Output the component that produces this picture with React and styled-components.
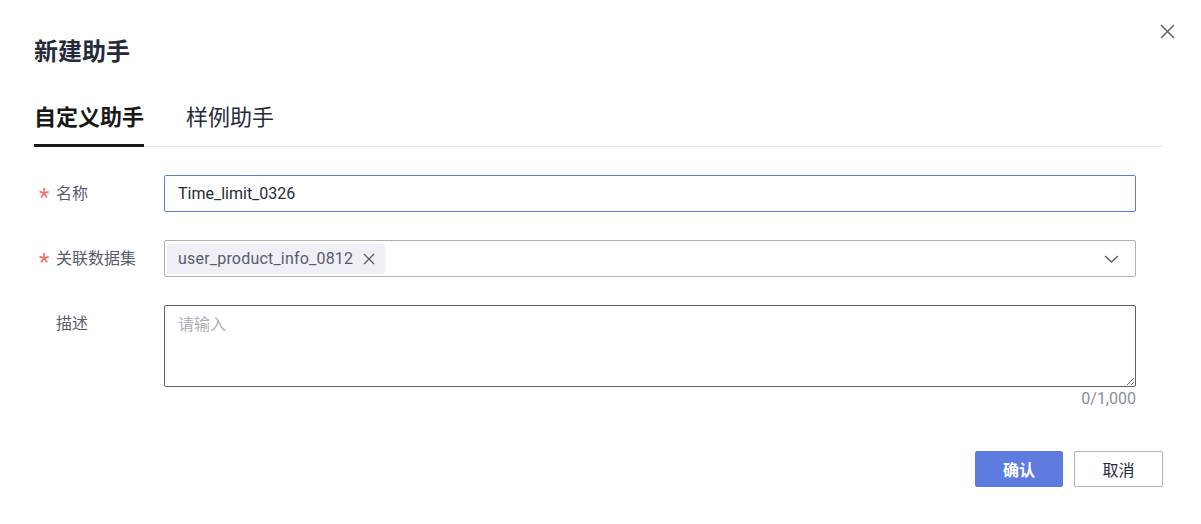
import styled, { createGlobalStyle } from "styled-components"

const GlobalStyle = createGlobalStyle`
    * { box-sizing: border-box; }
    body {
        margin: 0;
        background: #fff;
        font-family: Roboto, "Noto Sans CJK SC", sans-serif;
        color: #252b3a;
    }
`

const Dialog = styled.div`
    position: relative;
    width: 1201px;
    height: 524px;
    padding: 36px 38px 0 34px;
    background: #fff;
`

const Title = styled.h2`
    margin: 0;
    font-size: 24px;
    line-height: 32px;
    font-weight: 700;
    color: #252b3a;
`

const CloseBtn = styled.button`
    position: absolute;
    top: 24px;
    right: 26px;
    width: 15px;
    height: 15px;
    padding: 0;
    border: none;
    background: none;
    cursor: pointer;
    display: flex;
`

const Tabs = styled.div`
    display: flex;
    gap: 42px;
    margin-top: 35px;
    border-bottom: 1px solid #ebebeb;
`

const Tab = styled.div`
    font-size: 22px;
    line-height: 30px;
    padding-bottom: 11px;
    margin-bottom: -1px;
    font-weight: ${p => (p.$active ? 700 : 400)};
    color: ${p => (p.$active ? "#191919" : "#252b3a")};
    border-bottom: 3px solid ${p => (p.$active ? "#191919" : "transparent")};
    cursor: pointer;
`

const Form = styled.div`
    display: flex;
    flex-direction: column;
    gap: 28px;
    margin-top: 28px;
    padding-right: 27px;
`

const Row = styled.div`
    display: grid;
    grid-template-columns: 130px 1fr;
    align-items: start;
`

const Label = styled.div`
    display: flex;
    align-items: center;
    padding: 7px 0 0 5px;
    font-size: 16px;
    line-height: 24px;
    color: #575d6c;
`

const Star = styled.span`
    width: 17px;
    height: 24px;
    font-size: 24px;
    line-height: 24px;
    color: #f66f6a;
    transform: translateY(3px);
    visibility: ${p => (p.$blank ? "hidden" : "visible")};
`

const Input = styled.input`
    width: 100%;
    height: 37px;
    padding: 0 13px;
    border: 1px solid #5e7ce0;
    border-radius: 2px;
    font: inherit;
    font-size: 16px;
    color: #252b3a;
    outline: none;
`

const Select = styled.div`
    display: flex;
    align-items: center;
    height: 37px;
    padding: 0 16px 0 2px;
    border: 1px solid #adb0b8;
    border-radius: 2px;
`

const Tag = styled.span`
    display: flex;
    align-items: center;
    gap: 10px;
    height: 30px;
    padding: 0 10px 0 11px;
    background: #eef0f5;
    border-radius: 2px;
    font-size: 16px;
    letter-spacing: 0.2px;
    color: #575d6c;
`

const Chevron = styled.span`
    margin-left: auto;
    display: flex;
`

const Field = styled.div`
    display: flex;
    flex-direction: column;
`

const TextArea = styled.textarea`
    width: 100%;
    height: 82px;
    padding: 7px 13px;
    border: 1px solid #5c6170;
    border-radius: 2px;
    font: inherit;
    font-size: 16px;
    line-height: 24px;
    color: #252b3a;
    outline: none;
    display: block;
    &::placeholder { color: #adb0b8; }
`

const Counter = styled.div`
    text-align: right;
    font-size: 16px;
    line-height: 24px;
    color: #8a8e99;
`

const Footer = styled.div`
    display: flex;
    justify-content: flex-end;
    gap: 11px;
    margin-top: 40px;
`

const Button = styled.button`
    width: ${p => (p.$primary ? "88px" : "89px")};
    height: 36px;
    border-radius: 2px;
    font: inherit;
    font-size: 16px;
    font-weight: ${p => (p.$primary ? 700 : 400)};
    color: ${p => (p.$primary ? "#fff" : "#252b3a")};
    background: ${p => (p.$primary ? "#5e7ce0" : "#fff")};
    border: 1px solid ${p => (p.$primary ? "#5e7ce0" : "#adb0b8")};
    cursor: pointer;
`

const App = () => {
    return (
        <Dialog>
            <GlobalStyle />
            <Title>新建助手</Title>
            <CloseBtn>
                <svg width="15" height="15" viewBox="0 0 15 15">
                    <path d="M1 1L14 14M14 1L1 14" stroke="#5c6170" strokeWidth="1.5" />
                </svg>
            </CloseBtn>
            <Tabs>
                <Tab $active>自定义助手</Tab>
                <Tab>样例助手</Tab>
            </Tabs>
            <Form>
                <Row>
                    <Label><Star>*</Star>名称</Label>
                    <Input defaultValue="Time_limit_0326" />
                </Row>
                <Row>
                    <Label><Star>*</Star>关联数据集</Label>
                    <Select>
                        <Tag>
                            user_product_info_0812
                            <svg width="12" height="12" viewBox="0 0 12 12">
                                <path d="M1 1L11 11M11 1L1 11" stroke="#575d6c" strokeWidth="1.3" />
                            </svg>
                        </Tag>
                        <Chevron>
                            <svg width="15" height="8" viewBox="0 0 15 8">
                                <path d="M1 1L7.5 7L14 1" fill="none" stroke="#575d6c" strokeWidth="1.5" />
                            </svg>
                        </Chevron>
                    </Select>
                </Row>
                <Row>
                    <Label><Star $blank>*</Star>描述</Label>
                    <Field>
                        <TextArea placeholder="请输入" />
                        <Counter>0/1,000</Counter>
                    </Field>
                </Row>
            </Form>
            <Footer>
                <Button $primary>确认</Button>
                <Button>取消</Button>
            </Footer>
        </Dialog>
    )
}

export default App
